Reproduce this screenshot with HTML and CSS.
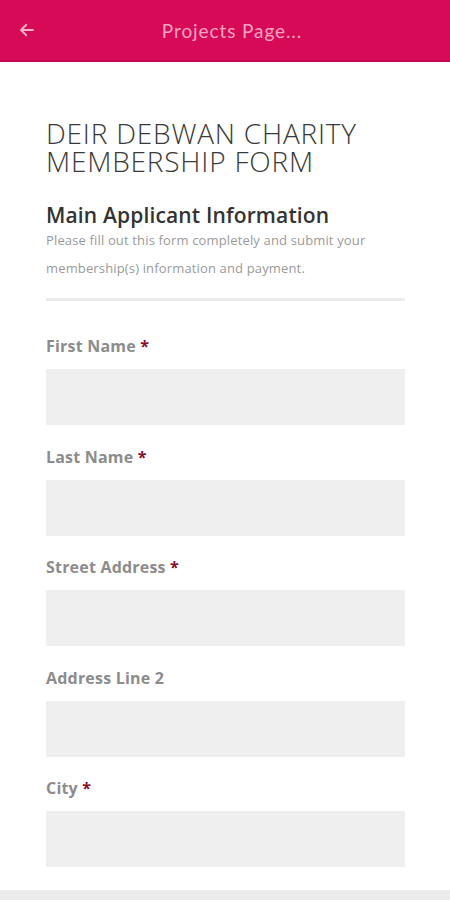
FILE: index.html
```html
<!DOCTYPE html>
<html>
<head>
<meta charset="utf-8">
<link rel="stylesheet" href="styles.css">
</head>
<body>
<header class="appbar">
  <span class="back">
    <svg width="18" height="18" viewBox="0 0 24 24"><path d="M20 12H5M11 5l-7 7 7 7" fill="none" stroke="#f5b3cc" stroke-width="2.4" stroke-linecap="round" stroke-linejoin="round"/></svg>
  </span>
  <span class="appbar-title">Projects Page...</span>
</header>
<main class="content">
  <h1 class="form-title">DEIR DEBWAN CHARITY MEMBERSHIP FORM</h1>
  <h2 class="section-title">Main Applicant Information</h2>
  <p class="section-desc">Please fill out this form completely and submit your membership(s) information and payment.</p>
  <hr class="divider">
  <div class="field">
    <label class="label">First Name <span class="req">*</span></label>
    <div class="input"></div>
  </div>
  <div class="field">
    <label class="label">Last Name <span class="req">*</span></label>
    <div class="input"></div>
  </div>
  <div class="field">
    <label class="label">Street Address <span class="req">*</span></label>
    <div class="input"></div>
  </div>
  <div class="field">
    <label class="label">Address Line 2</label>
    <div class="input"></div>
  </div>
  <div class="field">
    <label class="label">City <span class="req">*</span></label>
    <div class="input"></div>
  </div>
</main>
<div class="bottombar"></div>
</body>
</html>
```
FILE: styles.css
```css
* { box-sizing: border-box; }
html, body { margin: 0; padding: 0; }
body {
  width: 450px;
  height: 900px;
  overflow: hidden;
  background: #fff;
  font-family: "Open Sans", "Liberation Sans", sans-serif;
  display: flex;
  flex-direction: column;
}
.appbar {
  height: 62px;
  flex: none;
  background: #d70a57;
  border-bottom: 2px solid #c40850;
  display: flex;
  align-items: center;
  padding: 0 18px;
}
.back { display: flex; align-items: center; }
.appbar-title {
  flex: 1;
  text-align: center;
  color: #f3a3c2;
  font-family: "Lato", "Open Sans", sans-serif;
  font-size: 19px;
  letter-spacing: 0.9px;
  margin-right: 4px;
}
.content {
  flex: 1;
  padding: 57px 45px 0 46px;
}
.form-title {
  margin: 0;
  font-weight: 300;
  font-size: 28px;
  line-height: 28px;
  letter-spacing: 0.8px;
  color: #3a3a3a;
}
.section-title {
  margin: 29px 0 0;
  font-weight: 600;
  font-size: 21px;
  line-height: 22px;
  letter-spacing: 0.15px;
  color: #333;
}
.section-desc {
  margin: 0;
  font-size: 13px;
  line-height: 28px;
  letter-spacing: 0.15px;
  color: #9a9a9a;
}
.divider {
  border: 0;
  height: 3px;
  background: #ebebeb;
  margin: 16px 0 0;
}
.field { margin-top: 34px; }
.field + .field { margin-top: 20.5px; }
.label {
  display: block;
  font-weight: 700;
  font-size: 16px;
  line-height: 22px;
  letter-spacing: 0.2px;
  color: #8c8c8c;
}
.req { color: #8a0b2e; }
.input {
  margin-top: 12px;
  height: 56px;
  background: #efefef;
}
.bottombar {
  height: 10px;
  flex: none;
  background: #ebebeb;
}
```
